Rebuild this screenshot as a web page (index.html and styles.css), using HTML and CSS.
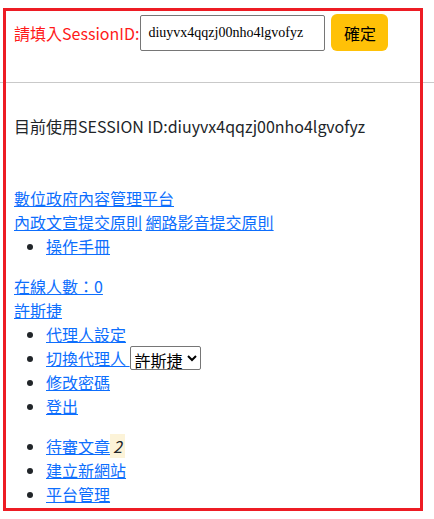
FILE: index.html
```html
<!DOCTYPE html>
<html lang="zh-Hant">
<head>
<meta charset="utf-8">
<title>Session</title>
<link rel="stylesheet" href="styles.css">
</head>
<body>
<div class="top">
  <form class="session-form">
    <label class="session-label" for="sid">請填入SessionID:</label>
    <input id="sid" class="session-input" type="text" value="diuyvx4qqzj00nho4lgvofyz">
    <button type="button" class="btn-warning">確定</button>
  </form>
</div>
<hr class="divider">
<div class="content">
  <p class="current">目前使用SESSION ID:diuyvx4qqzj00nho4lgvofyz</p>
  <div class="block">
    <div class="line"><a href="#">數位政府內容管理平台</a></div>
    <div class="line"><a href="#">內政文宣提交原則</a> <a href="#">網路影音提交原則</a></div>
    <ul class="list">
      <li><a href="#">操作手冊</a></li>
    </ul>
    <div class="line"><a href="#">在線人數：0</a></div>
    <div class="line"><a href="#">許斯捷</a></div>
    <ul class="list">
      <li><a href="#">代理人設定</a></li>
      <li><a href="#">切換代理人 </a><select class="agent"><option>許斯捷</option></select></li>
      <li><a href="#">修改密碼</a></li>
      <li><a href="#">登出</a></li>
    </ul>
    <ul class="list">
      <li><a href="#">待審文章</a><mark class="count"><i>2</i></mark></li>
      <li><a href="#">建立新網站</a></li>
      <li><a href="#">平台管理</a></li>
    </ul>
  </div>
</div>
<div class="frame"></div>
</body>
</html>
```
FILE: styles.css
```css
html, body {
  margin: 0;
  padding: 0;
  background: #fff;
}
body {
  font-family: "Noto Sans CJK TC", "Noto Sans", sans-serif;
  font-size: 16px;
  line-height: 24px;
  color: #212529;
  position: relative;
  width: 434px;
  height: 519px;
  overflow: hidden;
}
.top {
  padding: 14px 0 0 14px;
  height: 54px;
}
.session-form {
  display: flex;
  align-items: center;
  height: 37px;
}
.session-label {
  color: #ff1a1a;
  margin-right: 1px;
}
.session-input {
  box-sizing: border-box;
  width: 185px;
  height: 36px;
  border: 1px solid #767676;
  border-radius: 2px;
  padding: 0 7px;
  font-family: "Liberation Serif", serif;
  font-size: 14px;
  color: #000;
  margin-right: 6px;
}
.btn-warning {
  box-sizing: border-box;
  height: 37px;
  width: 57px;
  border: none;
  border-radius: 6px;
  background: #ffc107;
  color: #000;
  font-family: "Noto Sans CJK TC", sans-serif;
  font-size: 16px;
  padding: 0;
}
.divider {
  margin: 14px 0 0 0;
  border: 0;
  border-top: 1px solid #c9c9c9;
  height: 0;
}
.content {
  padding-left: 14px;
}
.current {
  margin: 31px 0 0 0;
}
.block {
  margin-top: 48px;
}
a {
  color: #0d6efd;
  text-decoration: underline;
}
.list {
  margin: 0 0 16px 0;
  padding-left: 32px;
}
.agent {
  box-sizing: border-box;
  font-family: "Noto Sans CJK TC", sans-serif;
  font-size: 16px;
  height: 24px;
  width: 71px;
  border: 1px solid #767676;
  border-radius: 2px;
  background: #fff;
  color: #000;
  vertical-align: top;
}
.count {
  background: #fcf3d8;
  padding: 0 3px;
  color: #212529;
}
.frame {
  position: absolute;
  left: 3px;
  top: 8px;
  width: 414px;
  height: 497px;
  border: 3px solid #ed1c24;
  pointer-events: none;
}
```
